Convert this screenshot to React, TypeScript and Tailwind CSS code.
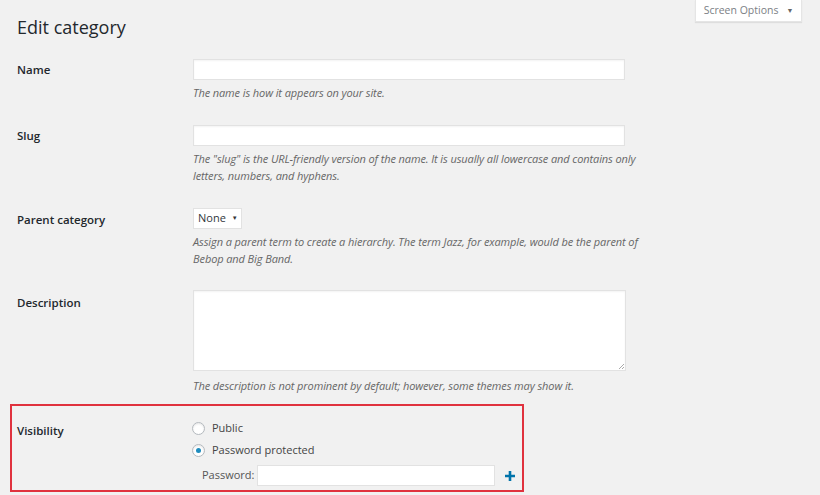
import React from "react";

const font = { fontFamily: '"Open Sans", "Noto Sans", sans-serif' };

function Row({ label, children, labelPt = "pt-[4px]" }: { label: string; children: React.ReactNode; labelPt?: string }) {
  return (
    <div className="flex">
      <div className={`w-[193px] shrink-0 pl-[17px] ${labelPt} text-[11.5px] font-semibold text-[#23282d] leading-[14px]`}>{label}</div>
      <div className="flex flex-col">{children}</div>
    </div>
  );
}

function Desc({ children }: { children: React.ReactNode }) {
  return <p className="mt-[4px] text-[11px] italic leading-[17px] text-[#666] tracking-[-0.1px]">{children}</p>;
}

export default function App() {
  return (
    <div className="relative w-[820px] h-[495px] overflow-hidden bg-[#f1f1f1]" style={font}>
      <div className="absolute right-[18px] top-0 w-[107px] h-[22px] bg-white shadow-[0_1px_1px_rgba(0,0,0,0.08)] border border-t-0 border-[#e5e5e5] flex items-center justify-center gap-[8px] pt-[1px] text-[10.5px] text-[#7b8085]">
        <span>Screen Options</span>
        <span className="text-[7px] text-[#666]">▼</span>
      </div>
      <h1 className="pl-[17px] pt-[14px] text-[18px] leading-[26px] text-[#23282d] font-normal">Edit category</h1>
      <div className="mt-[19px] flex flex-col">
        <Row label="Name">
          <input className="w-[432px] h-[21px] bg-white border border-[#e2e2e2] shadow-[inset_0_1px_2px_rgba(0,0,0,0.05)] outline-none" />
          <Desc>The name is how it appears on your site.</Desc>
        </Row>
        <div className="h-[24px]" />
        <Row label="Slug">
          <input className="w-[432px] h-[21px] bg-white border border-[#e2e2e2] shadow-[inset_0_1px_2px_rgba(0,0,0,0.05)] outline-none" />
          <Desc>
            The "slug" is the URL-friendly version of the name. It is usually all lowercase and contains only
            <br />
            letters, numbers, and hyphens.
          </Desc>
        </Row>
        <div className="h-[24px]" />
        <Row label="Parent category" labelPt="pt-[5px]">
          <div className="w-[49px] h-[21px] bg-white border border-[#e2e2e2] flex items-center pl-[4px] gap-[6px] text-[11px] text-[#32373c]">
            <span>None</span>
            <span className="text-[6px] text-[#333]">▼</span>
          </div>
          <Desc>
            Assign a parent term to create a hierarchy. The term Jazz, for example, would be the parent of
            <br />
            Bebop and Big Band.
          </Desc>
        </Row>
        <div className="h-[23px]" />
        <Row label="Description" labelPt="pt-[6px]">
          <div className="relative w-[433px] h-[81px] bg-white border border-[#e2e2e2] shadow-[inset_0_1px_2px_rgba(0,0,0,0.05)]">
            <svg className="absolute right-[1px] bottom-[1px]" width="6" height="6" viewBox="0 0 6 6">
              <path d="M6 1 L1 6 M6 4 L4 6" stroke="#aaa" strokeWidth="1" />
            </svg>
          </div>
          <p className="mt-[6px] text-[11px] italic leading-[17px] text-[#666] tracking-[-0.1px]">The description is not prominent by default; however, some themes may show it.</p>
        </Row>
      </div>
      <div className="ml-[10px] mt-[10px] w-[514px] h-[88px] border-2 border-[#e0323e]">
        <div className="flex pt-[17px]">
          <div className="w-[174px] shrink-0 pl-[5px] pt-[1px] text-[11.5px] font-semibold text-[#23282d] leading-[14px]">Visibility</div>
          <div className="flex flex-col">
            <div className="flex items-center gap-[7px] h-[16px] -mt-[3px] ml-[6px]">
              <span className="w-[13px] h-[13px] rounded-full border border-[#b4b9be] bg-white shadow-[inset_0_1px_2px_rgba(0,0,0,0.1)]" />
              <span className="text-[11px] text-[#444]">Public</span>
            </div>
            <div className="flex items-center gap-[7px] h-[16px] mt-[6px] ml-[6px]">
              <span className="w-[13px] h-[13px] rounded-full border border-[#b4b9be] bg-white flex items-center justify-center shadow-[inset_0_1px_2px_rgba(0,0,0,0.1)]">
                <span className="w-[5px] h-[5px] rounded-full bg-[#1e8cbe]" />
              </span>
              <span className="text-[11px] text-[#444]">Password protected</span>
            </div>
            <div className="flex items-center mt-[7px] ml-[16px]">
              <span className="text-[11px] text-[#555] w-[55px]">Password:</span>
              <input className="w-[238px] h-[21px] bg-white border border-[#e2e2e2] outline-none" />
              <svg className="ml-[9px]" width="12" height="12" viewBox="0 0 12 12">
                <path d="M6 1 V11 M1 6 H11" stroke="#0073aa" strokeWidth="2.6" />
              </svg>
            </div>
          </div>
        </div>
      </div>
    </div>
  );
}
